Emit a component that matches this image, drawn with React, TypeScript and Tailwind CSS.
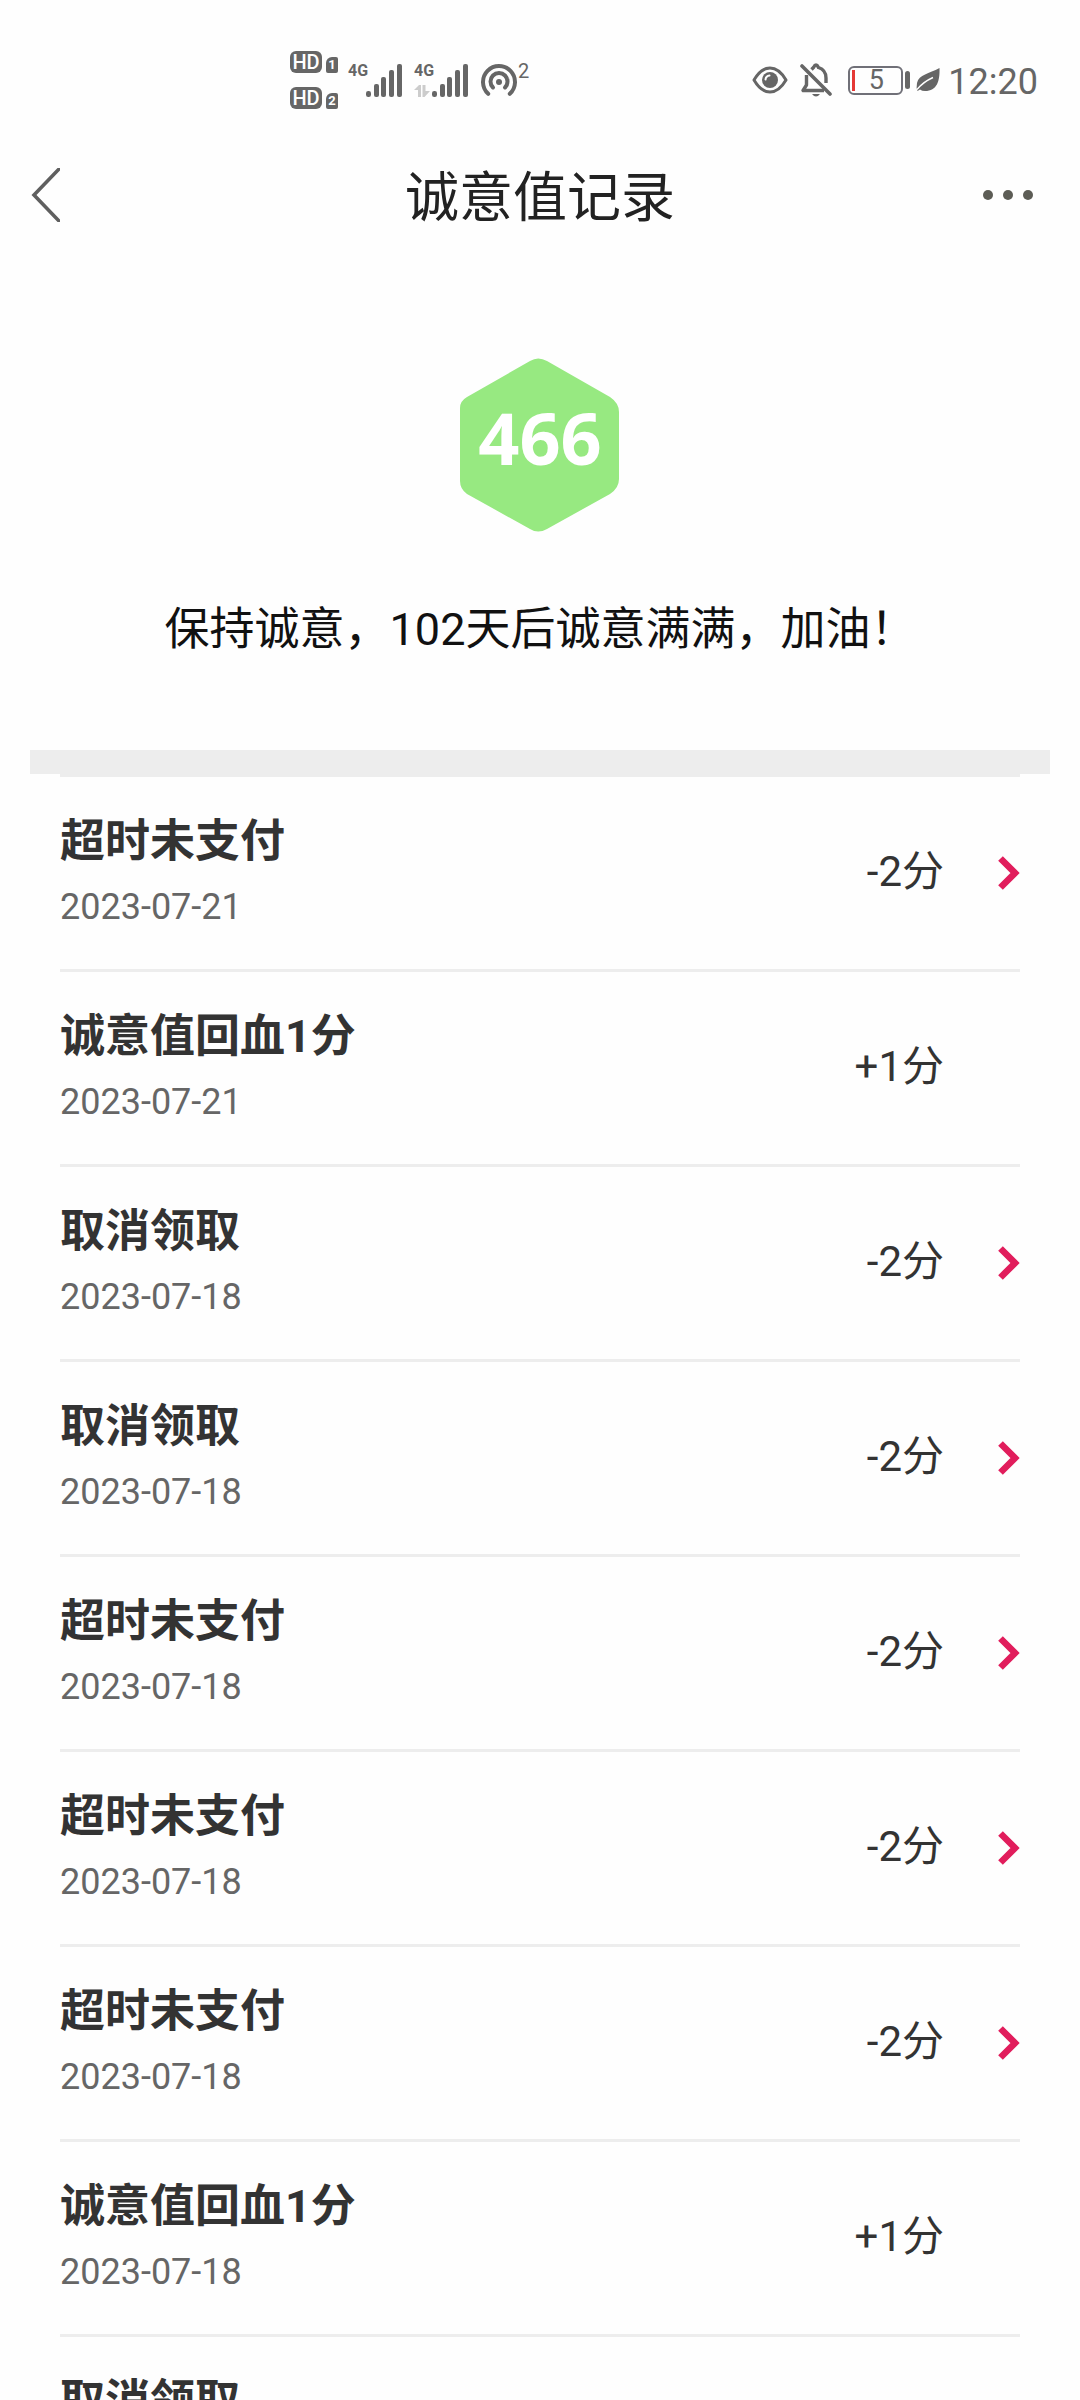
import React from "react";

type RecordItem = { title: string; date: string; score: string; detail: boolean };

const records: RecordItem[] = [
  { title: "超时未支付", date: "2023-07-21", score: "-2分", detail: true },
  { title: "诚意值回血1分", date: "2023-07-21", score: "+1分", detail: false },
  { title: "取消领取", date: "2023-07-18", score: "-2分", detail: true },
  { title: "取消领取", date: "2023-07-18", score: "-2分", detail: true },
  { title: "超时未支付", date: "2023-07-18", score: "-2分", detail: true },
  { title: "超时未支付", date: "2023-07-18", score: "-2分", detail: true },
  { title: "超时未支付", date: "2023-07-18", score: "-2分", detail: true },
  { title: "诚意值回血1分", date: "2023-07-18", score: "+1分", detail: false },
  { title: "取消领取", date: "2023-07-18", score: "-2分", detail: true },
];

function HdBadge({ sim }: { sim: string }) {
  return (
    <div className="flex items-end gap-1">
      <span className="flex h-[22px] w-8 items-center justify-center rounded-md bg-[#666] font-['Roboto'] text-[20px] leading-[22px] font-medium text-white">
        HD
      </span>
      <span className="flex h-4 w-3 items-center justify-center rounded-xs rounded-tl-md bg-[#666] font-['Roboto'] text-[13px] leading-4 font-bold text-white">
        {sim}
      </span>
    </div>
  );
}

function Signal({ data }: { data?: boolean }) {
  return (
    <div className="flex h-[34px] items-end">
      <div className="flex h-full w-[18px] flex-col justify-between">
        <span className="font-['Roboto'] text-[16px] leading-4 font-bold">4G</span>
        {data && (
          <svg width="16" height="12" viewBox="0 0 16 12" fill="#ccc">
            <path d="M0 5 L5 0 H7 V12 H4 V5 Z M8.5 0 H11.5 V6 H16 L10.5 12 H8.5 Z" />
          </svg>
        )}
      </div>
      <svg width="36" height="34" viewBox="0 0 36 34" fill="#666">
        <rect x="0" y="28" width="5" height="6" rx="2.2" />
        <rect x="8" y="21" width="5" height="13" rx="2" />
        <rect x="15" y="14" width="5" height="20" rx="2" />
        <rect x="23" y="7" width="5" height="27" rx="2" />
        <rect x="31" y="1" width="5" height="33" rx="2" />
      </svg>
    </div>
  );
}

function StatusBar() {
  return (
    <div className="flex h-[140px] items-center justify-between pt-5 pr-[42px] pl-[290px] text-[#666]">
      <div className="flex items-center">
        <div className="flex flex-col gap-3.5">
          <HdBadge sim="1" />
          <HdBadge sim="2" />
        </div>
        <div className="ml-2.5 flex gap-3">
          <Signal />
          <Signal data />
        </div>
        <div className="ml-3 flex h-[34px] items-start">
          <svg width="38" height="34" viewBox="0 0 38 34" fill="none" stroke="#666" strokeWidth="4" strokeLinecap="round">
            <path d="M8.2 30.8 A16 16 0 1 1 29.8 30.8" />
            <path d="M13 24.5 A8.5 8.5 0 1 1 25 24.5" />
            <circle cx="19" cy="19" r="3" fill="#666" stroke="none" />
          </svg>
          <span className="font-['Roboto'] text-[20px] leading-4">2</span>
        </div>
      </div>
      <div className="flex items-center">
        <svg width="36" height="28" viewBox="0 0 36 28" fill="none" stroke="#666" strokeWidth="3">
          <path d="M2 14 Q9 2 18 2 Q27 2 34 14 Q27 26 18 26 Q9 26 2 14 Z" strokeLinejoin="round" />
          <circle cx="18" cy="14" r="8" fill="#666" stroke="none" />
          <path d="M13.5 13.5 Q14 9.8 17.5 9.5" stroke="#fff" strokeWidth="2" strokeLinecap="round" />
        </svg>
        <svg className="ml-3" width="32" height="34" viewBox="0 0 32 34" fill="none" stroke="#666" strokeWidth="3.4">
          <path d="M2 3 L30 31" strokeLinecap="round" strokeWidth="3.6" />
          <path d="M11.5 6.5 Q13 5 13.5 4.5 Q16 -0.5 18.5 4.5 Q26 7 26 15 V20" />
          <path d="M6.5 12 V22 L3 27.5 H24" strokeLinejoin="round" />
          <path d="M12 31 H20 Q16 36 12 31 Z" fill="#666" stroke="none" />
        </svg>
        <div className="ml-4 flex h-[29px] w-[55px] items-center rounded-md border-2 border-[#707078] pl-0.5">
          <span className="h-[21px] w-[3px] bg-[#e53935]" />
          <span className="flex-1 pr-1 text-center font-['Roboto'] text-[27px] leading-6">5</span>
        </div>
        <span className="ml-0.5 h-[18px] w-[5px] rounded-sm bg-[#666]" />
        <svg className="ml-1.5" width="24" height="26" viewBox="0 0 24 26">
          <path d="M23.5 1 C24 14 21 24 9 24 Q6 24 4 22.5 L1.5 24 Q0 21 1 16 C3 7 13 7 23.5 1 Z" fill="#666" />
          <path d="M1 22.5 Q7 15 17 10.5" stroke="#fff" strokeWidth="1.4" fill="none" />
        </svg>
        <span className="ml-2 pt-1 font-['Roboto'] text-[36px] leading-9">12:20</span>
      </div>
    </div>
  );
}

function Header() {
  return (
    <header className="grid h-[110px] grid-cols-[1fr_auto_1fr] items-center px-[30px]">
      <button type="button" aria-label="返回" className="justify-self-start">
        <svg width="30" height="54" viewBox="0 0 30 54" fill="none" stroke="#5f5f5f" strokeWidth="3.6">
          <path d="M30 0 L4 27 L30 54" />
        </svg>
      </button>
      <h1 className="pt-2 text-[54px] leading-[72px] text-[#222]">诚意值记录</h1>
      <button type="button" aria-label="更多" className="flex gap-2.5 justify-self-end pr-[17px]">
        <span className="size-2.5 rounded-full bg-[#5c5c55]" />
        <span className="size-2.5 rounded-full bg-[#5c5c55]" />
        <span className="size-2.5 rounded-full bg-[#5c5c55]" />
      </button>
    </header>
  );
}

function ScoreBadge() {
  return (
    <div className="relative h-[174px] w-40">
      <svg width="159" height="174" viewBox="0 0 159 174" fill="#97e981">
        <path d="M70 3 Q78 -2 87 3 L150 39 Q159 45 159 54 V121 Q159 130 150 136 L87 171 Q78 176 70 171 L7 136 Q0 131 0 123 V50 Q0 43 7 39 Z" />
      </svg>
      <span className="absolute inset-x-0 top-[30px] text-center font-['Open_Sans',sans-serif] text-[72px] leading-[98px] font-bold text-white">
        466
      </span>
    </div>
  );
}

function RecordRow({ item }: { item: RecordItem }) {
  const body = (
    <>
      <div className="flex-1 pb-1.5">
        <p className="text-[45px] leading-[60px] font-bold text-[#333]">{item.title}</p>
        <p className="mt-3.5 text-[36px] leading-[42px] text-[#666]">{item.date}</p>
      </div>
      <span className="pb-0.5 text-[42px] leading-[60px] text-[#333]">{item.score}</span>
      <span className="ml-[54px] flex w-[22px]">
        {item.detail && (
          <svg width="22" height="34" viewBox="0 0 22 34" fill="none" stroke="#e11d5c" strokeWidth="6.6">
            <path d="M2.5 2.5 L17 17 L2.5 31.5" />
          </svg>
        )}
      </span>
    </>
  );
  const row = "flex h-48 items-center";
  return (
    <li className="border-t-3 border-[#ededed]">
      {item.detail ? (
        <a href="#detail" className={row}>
          {body}
        </a>
      ) : (
        <div className={row}>{body}</div>
      )}
    </li>
  );
}

export default function App() {
  return (
    <div
      lang="zh-CN"
      className="flex h-screen flex-col bg-[#fefefe] font-['Roboto','Noto_Sans_CJK_SC',sans-serif]"
    >
      <StatusBar />
      <Header />
      <main className="min-h-0 flex-1 overflow-y-auto px-[30px] [scrollbar-width:none]">
        <section className="flex flex-col items-center pt-[108px] pb-[90px]">
          <ScoreBadge />
          <p className="mt-[68px] text-[45px] leading-[60px] text-[#111]">保持诚意，102天后诚意满满，加油！</p>
        </section>
        <div className="h-6 bg-[#ededed]" />
        <ul className="px-[30px]">
          {records.map((item, i) => (
            <RecordRow key={i} item={item} />
          ))}
        </ul>
      </main>
    </div>
  );
}
